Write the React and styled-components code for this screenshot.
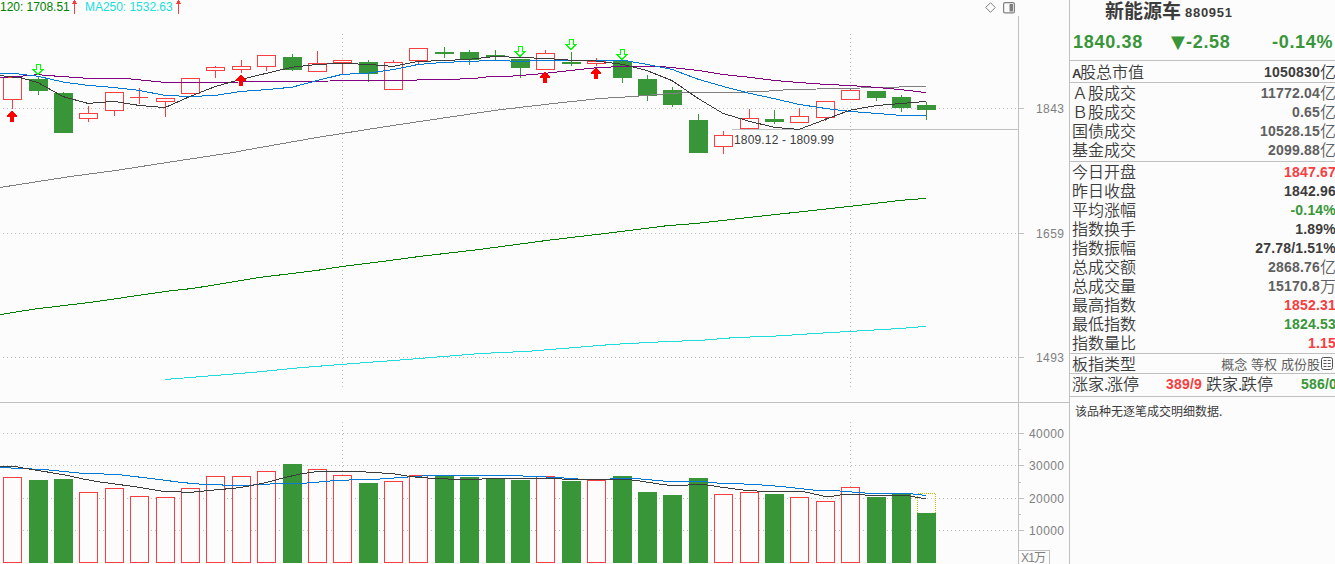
import React from "react";
import styled, { createGlobalStyle } from "styled-components";

const RED = "#f83e3e";
const GREEN = "#389638";
const DARK = "#3c3c3c";
const GREY = "#606060";
const LINE = "#c0c0c0";
const BG = "#fcfcfc";

// [left, up, wickTop, bodyTop, bodyBottom, wickBottom, volumeTop]
const candles = [
  [3, 1, 77, 77, 100, 109, 477],
  [29, 0, 77, 79, 91, 95, 480],
  [54, 0, 92, 93, 133, 133, 479],
  [79, 1, 106, 113, 119, 122, 492],
  [105, 1, 92, 92, 111, 116, 488],
  [130, 1, 88, 97, 98, 104, 496],
  [156, 1, 98, 98, 102, 117, 497],
  [181, 1, 78, 78, 94, 94, 488],
  [206, 1, 66, 67, 71, 78, 476],
  [232, 1, 60, 66, 70, 73, 476],
  [257, 1, 55, 55, 67, 71, 471],
  [283, 0, 54, 57, 70, 71, 464],
  [308, 1, 51, 63, 72, 72, 469],
  [333, 1, 60, 60, 63, 74, 475],
  [359, 0, 60, 62, 74, 82, 483],
  [384, 1, 60, 62, 90, 90, 481],
  [409, 1, 48, 48, 61, 64, 475],
  [435, 0, 47, 52, 54, 58, 475],
  [460, 0, 50, 52, 60, 65, 477],
  [486, 0, 50, 55, 57, 60, 478],
  [511, 0, 59, 59, 68, 78, 480],
  [536, 1, 50, 53, 70, 70, 476],
  [562, 0, 52, 62, 64, 66, 481],
  [587, 1, 58, 61, 64, 66, 480],
  [613, 0, 61, 61, 78, 83, 476],
  [638, 0, 75, 79, 96, 101, 492],
  [663, 0, 87, 90, 105, 107, 495],
  [689, 0, 114, 120, 153, 153, 478],
  [714, 1, 131, 135, 147, 154, 494],
  [740, 1, 109, 118, 129, 129, 492],
  [765, 0, 110, 119, 122, 124, 494],
  [790, 1, 108, 116, 123, 123, 497],
  [816, 1, 101, 101, 118, 121, 501],
  [841, 1, 89, 90, 100, 100, 487],
  [867, 0, 91, 91, 98, 101, 497],
  [892, 0, 95, 97, 108, 112, 493],
  [917, 0, 102, 105, 110, 120, 513],
];

const priceLines = [
  {
    color: "#808080",
    points: "0,187.5 67,177 117,170.3 167,162.5 200,157.5 233,152.5 250,149.3 317,137.5 383,127 450,117 500,109.7 560,102.8 600,98.5 633,96.5 660,94.3 687,92.5 735,92.4 762,91.5 787,89.7 838,88.5 888,87.4 914,86.5 926,86.4",
  },
  {
    color: "#800080",
    points: "0,77.5 19,76.4 38,74.7 50,75.7 63,76.6 88,78.4 127,78.6 165,82.4 241,82 266,81.4 330,81 342,80.5 400,80.4 444,79.4 456,79.2 475,78.4 490,76.5 507,76.4 520,75.5 545,73.4 571,70.4 596,67.8 622,66.4 660,66.5 672,67.6 698,70.4 723,74.5 749,77.2 774,80.4 799,82.5 825,84.4 850,85.5 876,87.4 901,89.6 926,92.6",
  },
  {
    color: "#0078d7",
    points: "0,73.4 15,73.5 38,76.3 63,82 88,85.4 114,87.5 139,90.4 165,95.4 190,96.5 215,95.5 241,91.4 266,89.7 292,87.2 317,80.6 342,74.4 368,73.2 393,69.6 418,64.5 444,62.4 469,61.4 495,60.4 520,61.4 545,60.4 625,60.5 647,64.4 672,69.4 698,79.2 723,86.4 749,93.2 774,98.6 799,104.4 825,108.4 850,111.4 876,113.4 901,115.4 926,115.4",
  },
  {
    color: DARK,
    points: "0,75.5 12,77 20,77.6 38,82.6 63,96.6 88,103.4 114,101.4 139,105.4 165,107.6 190,96.5 215,86.6 241,79.4 266,73.4 292,67.3 317,64.4 342,63.4 368,64.4 393,66.4 418,61.5 444,60.5 469,59.4 495,56.4 520,57.5 545,58.4 571,60.2 596,61 622,64.2 647,70.6 672,80.6 698,98.4 723,113.4 749,121.2 774,127.3 799,129.4 825,119.6 850,110.2 876,105.6 901,103.5 926,101.4",
  },
  {
    color: "#008000",
    points: "0,314.6 35,309 92,302.2 165,291.5 193,288.4 260,277.4 317,270.4 342,266.5 383,261.4 420,256.4 480,249.4 547,240.4 620,231.7 667,225.7 697,223.4 753,217 850,206.4 900,200.4 926,198.4",
  },
  {
    color: "#20dcdc",
    points: "165,379.5 253,372.4 300,367.7 342,364.4 417,358.7 480,353.5 527,351.4 613,344.4 670,341.4 700,340.4 737,337.4 770,336.4 817,333.4 850,331.4 900,328.5 926,326.4",
  },
];

const volumeLines = [
  {
    color: "#0078d7",
    points: "0,467.4 23,468.7 43,469.4 83,473.4 117,474.4 150,478.4 183,482.6 203,484.4 235,485.4 253,485 280,483.4 303,483.4 337,480.4 380,479 400,477.6 431,475.4 507,475.4 533,476.4 557,477.5 583,479.4 607,479.4 615,478.4 634,478.4 667,481.4 703,481.4 717,483 755,484.4 783,486.7 817,490.4 837,490.8 857,492.4 870,493.4 907,493.4 926,495.4",
  },
  {
    color: DARK,
    points: "0,466.4 15,466.4 27,468.7 50,472.4 67,475.4 83,479 100,482 133,486.4 162,491.2 190,492.4 200,491.4 217,489.7 233,488.4 247,486.4 267,482.4 283,478 300,474 317,471.6 353,471.4 375,472.4 397,474.2 410,476.6 433,478.4 457,479.4 480,479.2 487,478.4 560,478.4 563,479.4 627,479.4 640,481 657,483.7 670,485.4 685,485.4 692,484.4 703,484.4 723,487.4 743,490 763,491.4 802,491.4 813,493.7 825,496.4 833,496.2 843,494.5 863,494.5 867,495.4 907,495.4 917,497.4 926,498.7",
  },
];

const stats = [
  [
    ["A股总市值", "1050830", "亿", DARK],
  ],
  [
    ["Ａ股成交", "11772.04", "亿", GREY],
    ["Ｂ股成交", "0.65", "亿", GREY],
    ["国债成交", "10528.15", "亿", GREY],
    ["基金成交", "2099.88", "亿", GREY],
  ],
  [
    ["今日开盘", "1847.67", "", RED],
    ["昨日收盘", "1842.96", "", DARK],
    ["平均涨幅", "-0.14%", "", GREEN],
    ["指数换手", "1.89%", "", DARK],
    ["指数振幅", "27.78/1.51%", "", DARK],
    ["总成交额", "2868.76", "亿", GREY],
    ["总成交量", "15170.8", "万", GREY],
    ["最高指数", "1852.31", "", RED],
    ["最低指数", "1824.53", "", GREEN],
    ["指数量比", "1.15", "", RED],
  ],
];

const Candle = ({ data }) => {
  const [x, up, wickTop, top, bottom, wickBottom] = data;
  const color = up ? RED : GREEN;
  return (
    <g>
      <rect x={x + 9} y={wickTop} width="1" height={wickBottom - wickTop} fill={color} />
      {up && bottom - top > 1 ? (
        <rect x={x + 0.5} y={top + 0.5} width="18" height={bottom - top - 1} fill={BG} stroke={color} />
      ) : (
        <rect x={x} y={top} width={up ? 18 : 19} height={bottom - top} fill={color} />
      )}
    </g>
  );
};

const VolumeBar = ({ data }) => {
  const [x, up, , , , , top] = data;
  return up ? (
    <rect x={x + 0.5} y={top + 0.5} width="18" height={562 - top} fill={BG} stroke={RED} />
  ) : (
    <rect x={x} y={top} width="19" height={563 - top} fill={GREEN} />
  );
};

const BuyMark = ({ x, y }) => (
  <path
    d={`M${x} ${y}h1v1h1v1h1v1h1v1h1v2h-3v5h-4v-5h-3v-2h1v-1h1v-1h1v-1h1v-1z`}
    fill="#ff0000"
  />
);

const SellMark = ({ x, y }) => (
  <path
    d={`M${x - 2} ${y + 0.5}h4v5h3l-5 5l-5 -5h3z`}
    fill={BG}
    stroke="#00ff00"
  />
);

const Grid = ({ rows, from, to }) => (
  <g stroke={LINE} strokeDasharray="1 3">
    {rows.map((y) => <line key={y} x1="3" x2="1018" y1={y + 0.5} y2={y + 0.5} />)}
    {[342, 850].map((x) => <line key={x} x1={x + 0.5} x2={x + 0.5} y1={from} y2={to} />)}
  </g>
);

const AxisLabel = ({ y, children }) => (
  <AxisText x={children.length > 4 ? 1029 : 1036} y={y + 5} textLength={children.length * 7}>
    {children}
  </AxisText>
);

const Lines = ({ data }) =>
  data.map((l, i) => <polyline key={i} points={l.points} fill="none" stroke={l.color} />);

const UpTick = () => (
  <svg width="7" height="14" viewBox="0 0 7 14" shapeRendering="crispEdges">
    <path d="M3 0h1v1h1v2h1v1h-2v10h-1v-10h-2v-1h1v-2h1z" fill={RED} />
  </svg>
);

const App = () => {
  return (
    <Page>
      <GlobalStyle />
      <Charts>
        <Legend>
          <Average $color="#008000" $width={69}>120: 1708.51</Average>
          <UpTick />
          <Average $color="#20dcdc" $width={88} $gap={7}>MA250: 1532.63</Average>
          <UpTick />
          <Tools>
            <svg width="11" height="11" viewBox="0 0 11 11">
              <path d="M5.5 .7L10.3 5.5L5.5 10.3L.7 5.5z" fill="none" stroke="#808080" />
            </svg>
            <svg width="12" height="12" viewBox="0 0 12 12">
              <rect x=".6" y=".6" width="10.8" height="10.3" rx="1.5" fill="none" stroke="#808080" strokeWidth="1.2" />
              <rect x="6.5" y="2" width="3.5" height="7.5" fill="#808080" />
            </svg>
          </Tools>
        </Legend>

        <Plot width="1069" height="386" viewBox="0 16 1069 386">
          <Grid rows={[108, 233, 357]} from={34} to={387} />
          <rect x="732" y="129" width="286" height="1" fill={LINE} />
          {candles.map((c) => <Candle key={c[0]} data={c} />)}
          <Lines data={priceLines} />
          {[[12, 111], [241, 75], [545, 72], [596, 68]].map(([x, y]) => <BuyMark key={x} x={x} y={y} />)}
          {[[38, 64], [520, 46], [571, 39], [622, 49]].map(([x, y]) => <SellMark key={x} x={x} y={y} />)}
          <RangeText x="734" y="144" textLength="100">1809.12 - 1809.99</RangeText>
          <rect x="1018" y="16" width="1" height="386" fill={LINE} />
          {[108, 233, 357].map((y) => <rect key={y} x="1019" y={y} width="5" height="1" fill={LINE} />)}
          <AxisLabel y={108}>1843</AxisLabel>
          <AxisLabel y={233}>1659</AxisLabel>
          <AxisLabel y={357}>1493</AxisLabel>
        </Plot>

        <Plot width="1069" height="162" viewBox="0 402 1069 162">
          <rect x="0" y="402" width="1069" height="1" fill={LINE} />
          <Grid rows={[433, 465, 498, 530]} from={422} to={563} />
          {candles.map((c) => <VolumeBar key={c[0]} data={c} />)}
          <path d="M917.5 513V493.5H935.5V513" fill="none" stroke="#c0c000" strokeDasharray="1 1" />
          <Lines data={volumeLines} />
          <rect x="1018" y="402" width="1" height="162" fill={LINE} />
          {[433, 465, 498, 530].map((y) => <rect key={y} x="1019" y={y} width="5" height="1" fill={LINE} />)}
          {[449, 482, 514].map((y) => <rect key={y} x="1019" y={y} width="2" height="1" fill={LINE} />)}
          <AxisLabel y={433}>40000</AxisLabel>
          <AxisLabel y={465}>30000</AxisLabel>
          <AxisLabel y={498}>20000</AxisLabel>
          <AxisLabel y={530}>10000</AxisLabel>
          <rect x="1018.5" y="550.5" width="31" height="20" fill="none" stroke={LINE} />
          <AxisText x="1021" y="562" textLength="25">X1万</AxisText>
        </Plot>
      </Charts>

      <Panel>
        <Title>
          <Name>新能源车</Name>
          <Code>880951</Code>
        </Title>
        <Quote>
          <Price $width={98}>1840.38</Price>
          <Price $width={101}>
            <Triangle>▼</Triangle>-2.58
          </Price>
          <Price>-0.14%</Price>
        </Quote>
        {stats.map((rows, i) => (
          <Section key={i} $top={i === 0 ? 1 : 0} $bottom={[1, 2, 1][i]}>
            {rows.map(([label, value, unit, color]) => (
              <Row key={label}>
                <Label>{label[0] === "A" ? <><Latin>A</Latin>{label.slice(1)}</> : label}</Label>
                <Value $color={color}>
                  {value}
                  {unit && <Unit>{unit}</Unit>}
                </Value>
              </Row>
            ))}
          </Section>
        ))}
        <Section>
          <Row>
            <Label>板指类型</Label>
            <Tags>
              概念 等权 成份股
              <svg width="12" height="13" viewBox="0 0 12 13">
                <rect x=".5" y=".5" width="11" height="12" rx="2" fill="none" stroke="#505050" />
                <path d="M2.5 3.5h3M2.5 6.5h3M2.5 9.5h3M6.7 3.5h3M6.7 6.5h3M6.7 9.5h3" stroke="#505050" />
              </svg>
            </Tags>
          </Row>
        </Section>
        <Section $bottom={3}>
          <Row $start>
            <Label>涨家<Dot>.</Dot>涨停</Label>
            <Count $color={RED} $width={67}>389/9</Count>
            <Label>跌家<Dot>.</Dot>跌停</Label>
            <Count $color={GREEN} $width={67}>586/0</Count>
          </Row>
        </Section>
        <Notice>该品种无逐笔成交明细数据.</Notice>
      </Panel>
    </Page>
  );
};

const GlobalStyle = createGlobalStyle`
body {
  margin: 0;
  background: ${BG};
  overflow: hidden;
}
`

const Page = styled.div`
display: flex;
width: 1335px;
height: 564px;
overflow: hidden;
background: ${BG};
color: ${DARK};
font-family: "Liberation Sans", "Noto Sans CJK SC", sans-serif;
`

const Charts = styled.div`
display: flex;
flex-direction: column;
width: 1069px;
flex: none;
`

const Legend = styled.div`
display: flex;
height: 16px;
font-size: 12px;
line-height: 14px;
white-space: nowrap;

> svg {
  margin-left: 2px;
}
`

const Average = styled.span`
width: ${(p) => p.$width}px;
margin-left: ${(p) => p.$gap || 0}px;
color: ${(p) => p.$color};
letter-spacing: -.03px;
`

const Tools = styled.div`
display: flex;
gap: 7px;
margin: 2px 54px 0 auto;
`

const Plot = styled.svg`
display: block;
flex: none;
shape-rendering: crispEdges;
`

const AxisText = styled.text`
fill: #808080;
font-size: 12px;
`

const RangeText = styled.text`
fill: ${DARK};
font-size: 12px;
`

const Panel = styled.div`
box-sizing: border-box;
width: 266px;
height: 564px;
border-left: 1px solid ${LINE};
overflow: hidden;
white-space: nowrap;
`

const Title = styled.div`
display: flex;
height: 24px;
padding-left: 35px;
`

const Name = styled.span`
font: bold 19px/20px "Noto Sans CJK SC", sans-serif;
`

const Code = styled.span`
margin-left: 4px;
font-size: 13px;
font-weight: bold;
line-height: 26px;
letter-spacing: .7px;
`

const Quote = styled.div`
display: flex;
height: 36px;
padding-left: 3px;
border-bottom: 1px solid ${LINE};
color: ${GREEN};
font-size: 18px;
font-weight: bold;
line-height: 36px;
letter-spacing: .7px;
`

const Price = styled.span`
display: flex;
flex: none;
width: ${(p) => (p.$width ? p.$width + "px" : "auto")};
`

const Triangle = styled.span`
width: 15px;
font-family: "DejaVu Sans", sans-serif;
letter-spacing: 0;
`

const Section = styled.div`
padding-top: ${(p) => p.$top || 0}px;
padding-bottom: ${(p) => p.$bottom || 0}px;
border-bottom: 1px solid ${LINE};
`

const Row = styled.div`
display: flex;
justify-content: ${(p) => (p.$start ? "flex-start" : "space-between")};
height: 19px;
padding-left: 2px;
line-height: 19px;
`

const Label = styled.span`
font-family: "Noto Sans CJK SC", sans-serif;
font-size: 16px;
font-weight: 350;
`

const Latin = styled.b`
display: inline-block;
width: 8px;
font: bold 13px "Liberation Sans", sans-serif;
letter-spacing: -1px;
`

const Value = styled.span`
display: flex;
margin-right: -1px;
color: ${(p) => p.$color};
font-size: 14px;
font-weight: bold;
line-height: 20px;
letter-spacing: .2px;
`

const Unit = styled.span`
font: 350 16px/19px "Noto Sans CJK SC", sans-serif;
letter-spacing: 0;
`

const Tags = styled.span`
display: flex;
align-items: center;
gap: 1px;
margin-right: 2px;
color: #606060;
font-family: "Noto Sans CJK SC", sans-serif;
font-size: 13px;
line-height: 17px;
word-spacing: 1px;
`

const Dot = styled.span`
display: inline-block;
width: 3px;
`

const Count = styled.span`
box-sizing: border-box;
flex: none;
width: ${(p) => p.$width}px;
padding-right: 4px;
color: ${(p) => p.$color};
font-size: 14px;
font-weight: bold;
line-height: 20px;
letter-spacing: .2px;
text-align: right;

&:last-child {
  padding-right: 0;
  margin-left: -3px;
}
`

const Notice = styled.div`
padding: 5px 0 0 5px;
font-family: "Noto Sans CJK SC", sans-serif;
font-size: 12px;
line-height: 18px;
`

export default App;
